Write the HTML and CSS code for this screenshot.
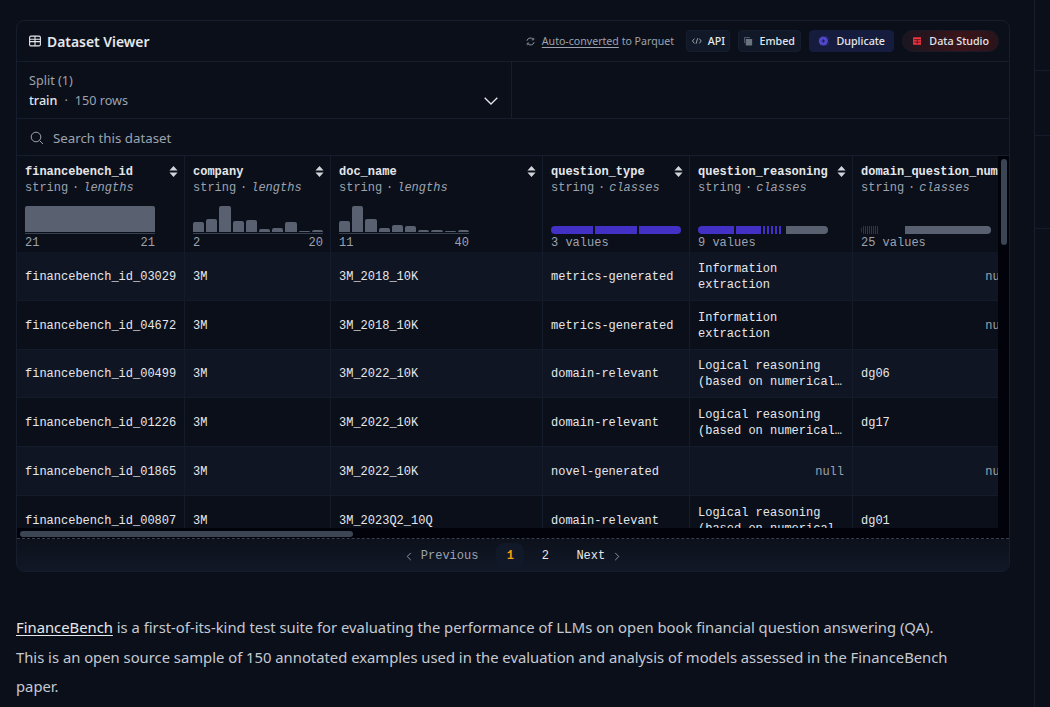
FILE: index.html
```html
<!DOCTYPE html>
<html lang="en">
<head>
<meta charset="utf-8">
<title>Dataset Viewer</title>
<link rel="stylesheet" href="styles.css">
</head>
<body>
<div class="page">
<main class="main">
<section class="card">
  <header class="head">
    <h2 class="title"><svg class="ico-table" viewBox="0 0 12 12"><rect x=".6" y="1.1" width="10.8" height="9.8" rx="1.4" fill="none" stroke="currentColor" stroke-width="1.1"/><path d="M.6 4.2h10.8M.6 6.6h10.8M6 1.1v9.8" stroke="currentColor" stroke-width="1.1" fill="none"/></svg>Dataset Viewer</h2>
    <div class="actions">
      <span class="auto"><svg class="ico-conv" viewBox="0 0 10 10"><path d="M1 4.2A4 4 0 0 1 8 2.6M9 5.8A4 4 0 0 1 2 7.4" fill="none" stroke="currentColor" stroke-width="1"/><path d="M8.6.9v2.3H6.3M1.4 9.1V6.8h2.3" fill="none" stroke="currentColor" stroke-width=".8"/></svg><a class="link">Auto-converted</a> to Parquet</span>
      <span class="btn btn-api"><svg class="ico-code" viewBox="0 0 12 8"><path d="M3 1 .6 4 3 7M9 1l2.4 3L9 7M7 .6 5 7.4" fill="none" stroke="currentColor" stroke-width=".9"/></svg>API</span>
      <span class="btn btn-embed"><svg class="ico-copy" viewBox="0 0 11 11"><path d="M.5 7.5V.5h7" fill="none" stroke="#6b7280" stroke-width="1"/><rect x="2.2" y="2.2" width="8.3" height="8.3" rx=".8" fill="#6b7280"/></svg>Embed</span>
      <span class="btn btn-dup"><svg class="ico-dup" viewBox="0 0 14 14"><circle cx="6.5" cy="7" r="5.6" fill="#4f46c8"/><path d="M10 .9A6.8 6.8 0 0 1 10 13.1" fill="none" stroke="#4338ca" stroke-dasharray="1 .8"/><path d="M6.5 5v4M4.5 7h4" stroke="#14183a" stroke-width="1"/></svg>Duplicate</span>
      <span class="btn btn-studio"><svg class="ico-studio" viewBox="0 0 11 10"><rect width="11" height="10" rx="1" fill="#ef3340"/><path d="M1 3.2h9M1 6.4h9M5.5 3.2V9" stroke="#3a1118" stroke-width="1"/></svg>Data Studio</span>
    </div>
  </header>
  <div class="split-row">
    <div class="split">
      <div class="split-label">Split (1)</div>
      <div class="split-val"><span><b>train</b><i class="sep">·</i>150 rows</span><svg class="chev" viewBox="0 0 14 8"><path d="M.7.8 7 7l6.3-6.2" fill="none" stroke="currentColor" stroke-width="1.3"/></svg></div>
    </div>
  </div>
  <div class="search"><svg class="ico-search" viewBox="0 0 14 14"><circle cx="6" cy="6" r="4.8" fill="none" stroke="currentColor" stroke-width="1"/><path d="m9.6 9.6 3.4 3.4" stroke="currentColor" stroke-width="1"/></svg>Search this dataset</div>
  <div class="table-wrap">
    <div class="table-scroll">
    <table class="table">
      <colgroup><col class="c1"><col class="c2"><col class="c3"><col class="c4"><col class="c5"><col class="c6"></colgroup>
      <thead><tr>
        <th><div class="name"><span>financebench_id</span><svg class="sort" viewBox="0 0 10 12"><path d="M5 0 9.5 5H.5zM5 12 .5 7h9z"/></svg></div><div class="type">string<span class="dot">·</span><em>lengths</em></div>
          <div class="hist"><i class="full"></i></div><div class="range"><span>21</span><span>21</span></div></th>
        <th><div class="name"><span>company</span><svg class="sort" viewBox="0 0 10 12"><path d="M5 0 9.5 5H.5zM5 12 .5 7h9z"/></svg></div><div class="type">string<span class="dot">·</span><em>lengths</em></div>
          <div class="hist"><i class="h10"></i><i class="h13"></i><i class="h26"></i><i class="h11"></i><i class="h12"></i><i class="h3"></i><i class="h4"></i><i class="h10"></i><i class="h1"></i><i class="h2"></i></div><div class="range"><span>2</span><span>20</span></div></th>
        <th><div class="name"><span>doc_name</span><svg class="sort" viewBox="0 0 10 12"><path d="M5 0 9.5 5H.5zM5 12 .5 7h9z"/></svg></div><div class="type">string<span class="dot">·</span><em>lengths</em></div>
          <div class="hist"><i class="h11"></i><i class="h26"></i><i class="h13"></i><i class="h4"></i><i class="h7"></i><i class="h6"></i><i class="h2"></i><i class="h2"></i><i class="h1"></i><i class="h2"></i></div><div class="range"><span>11</span><span>40</span></div></th>
        <th><div class="name"><span>question_type</span><svg class="sort" viewBox="0 0 10 12"><path d="M5 0 9.5 5H.5zM5 12 .5 7h9z"/></svg></div><div class="type">string<span class="dot">·</span><em>classes</em></div>
          <div class="bar"><i class="seg s42"></i><i class="seg s42"></i><i class="seg s42"></i></div><div class="range"><span>3 values</span></div></th>
        <th><div class="name"><span>question_reasoning</span><svg class="sort" viewBox="0 0 10 12"><path d="M5 0 9.5 5H.5zM5 12 .5 7h9z"/></svg></div><div class="type">string<span class="dot">·</span><em>classes</em></div>
          <div class="bar"><i class="seg s36"></i><i class="seg s25"></i><i class="seg s2"></i><i class="seg s2"></i><i class="seg s2"></i><i class="seg s2"></i><i class="seg s2"></i><i class="rest"></i></div><div class="range"><span>9 values</span></div></th>
        <th><div class="name"><span class="cut">domain_question_num</span></div><div class="type">string<span class="dot">·</span><em>classes</em></div>
          <div class="bar ticks"><i class="tick"></i><i class="tick"></i><i class="tick"></i><i class="tick"></i><i class="tick"></i><i class="tick"></i><i class="tick"></i><i class="tick"></i><i class="tick"></i><i class="rest wide"></i></div><div class="range"><span>25 values</span></div></th>
      </tr></thead>
      <tbody>
        <tr><td>financebench_id_03029</td><td>3M</td><td>3M_2018_10K</td><td>metrics-generated</td><td>Information<br>extraction</td><td class="null">null</td></tr>
        <tr><td>financebench_id_04672</td><td>3M</td><td>3M_2018_10K</td><td>metrics-generated</td><td>Information<br>extraction</td><td class="null">null</td></tr>
        <tr><td>financebench_id_00499</td><td>3M</td><td>3M_2022_10K</td><td>domain-relevant</td><td>Logical reasoning<br>(based on numerical…</td><td>dg06</td></tr>
        <tr><td>financebench_id_01226</td><td>3M</td><td>3M_2022_10K</td><td>domain-relevant</td><td>Logical reasoning<br>(based on numerical…</td><td>dg17</td></tr>
        <tr><td>financebench_id_01865</td><td>3M</td><td>3M_2022_10K</td><td>novel-generated</td><td class="null">null</td><td class="null">null</td></tr>
        <tr><td>financebench_id_00807</td><td>3M</td><td>3M_2023Q2_10Q</td><td>domain-relevant</td><td>Logical reasoning<br>(based on numerical…</td><td>dg01</td></tr>
      </tbody>
    </table>
    </div>
    <div class="vtrack"><i class="vthumb"></i></div>
  </div>
  <div class="htrack"><i class="hthumb"></i></div>
  <nav class="pager">
    <span class="pg prev"><svg class="pchev" viewBox="0 0 6 10"><path d="M5 1 1 5l4 4" fill="none" stroke="currentColor"/></svg>Previous</span>
    <span class="num active">1</span>
    <span class="num">2</span>
    <span class="pg next">Next<svg class="pchev" viewBox="0 0 6 10"><path d="m1 1 4 4-4 4" fill="none" stroke="currentColor"/></svg></span>
  </nav>
</section>
<div class="prose">
  <p><a class="plink">FinanceBench</a> is a first-of-its-kind test suite for evaluating the performance of LLMs on open book financial question answering (QA).</p>
  <p>This is an open source sample of 150 annotated examples used in the evaluation and analysis of models assessed in the FinanceBench paper.</p>
</div>
</main>
<aside class="side"><div class="side-a"></div><div class="side-b"></div><div class="side-c"></div></aside>
</div>
</body>
</html>
```
FILE: styles.css
```css
* { box-sizing: border-box; }
html, body { margin: 0; height: 100%; overflow: hidden; }
body { background: #0b0f19; color: #e5e7eb; font-family: "Noto Sans", sans-serif; }
.page { display: flex; height: 707px; }
.main { width: 1035px; padding: 20px 0 0 16px; flex: none; border-right: 1px solid #161e2e; }
.side { flex: 1; }
.side-a { height: 71px; border-bottom: 1px solid #141b2a; }
.side-b { height: 65px; border-bottom: 1px solid #141b2a; }
.side-c { height: 93px; border-bottom: 1px solid #141b2a; }
.card { width: 994px; height: 552px; border: 1px solid #161e2e; border-radius: 8px; display: flex; flex-direction: column; overflow: hidden; background: #0b0f19; }
.head { height: 41px; flex: none; display: flex; align-items: center; justify-content: space-between; padding: 0 10px 0 12px; border-bottom: 1px solid #161e2e; }
.title { margin: 0; display: flex; align-items: center; gap: 6px; font-size: 13.9px; font-weight: 600; color: #e5e7eb; }
.ico-table { width: 12px; height: 12px; }
.actions { display: flex; align-items: center; font-size: 10.7px; white-space: nowrap; }
.auto { color: #9ca3af; display: flex; align-items: center; margin-right: 12px; white-space: pre; font-size: 10.6px; }
.ico-conv { width: 9px; height: 9px; margin-right: 7px; color: #9ca3af; }
.link { text-decoration: underline; text-underline-offset: 2px; }
.btn { height: 22px; display: flex; align-items: center; border-radius: 4px; color: #e5e7eb; border: 1px solid #161e2e; background: #111827; margin-left: 8px; font-weight: 500; }
.btn-api { padding: 0 4px 0 5px; width: 44px; margin-left: 0; }
.ico-code { width: 11px; height: 8px; margin-right: 6px; color: #d1d5db; }
.btn-embed { width: 63px; padding: 0 5px; }
.ico-copy { width: 11px; height: 11px; margin-right: 7px; }
.btn-dup { width: 85px; padding: 0 8px; background: #151c3e; border-color: #151c3e; }
.ico-dup { width: 14px; height: 14px; margin-right: 7px; }
.btn-studio { width: 97px; padding: 0 9px 0 10px; border-radius: 11px; background: linear-gradient(90deg, #1a1520, #3a1519 60%, #2a131a); border-color: #1c1a26; }
.ico-studio { width: 11px; height: 10px; margin-right: 8px; }
.split-row { height: 57px; flex: none; border-bottom: 1px solid #161e2e; }
.split { width: 495px; height: 56px; border-right: 1px solid #161e2e; padding: 10px 13px 0 12px; }
.split-label { font-size: 12.6px; line-height: 18px; color: #9ca3af; }
.split-val { font-size: 12.6px; line-height: 21px; color: #9ca3af; display: flex; justify-content: space-between; align-items: center; }
.split-val b { font-weight: 500; color: #e5e7eb; }
.sep { font-style: normal; margin: 0 7px; }
.chev { width: 14px; height: 8px; color: #e5e7eb; }
.search { height: 37px; flex: none; display: flex; align-items: center; padding: 1px 0 0 13px; font-size: 13.3px; color: #9ca3af; border-bottom: 1px solid #161e2e; }
.ico-search { width: 14px; height: 14px; margin-right: 9px; }
.table-wrap { display: flex; height: 372px; flex: none; }
.table-scroll { width: 981px; overflow: hidden; flex: none; }
.table { border-collapse: separate; border-spacing: 0; table-layout: fixed; width: 1006px; font-family: "Liberation Mono", monospace; font-size: 12px; }
.c1 { width: 168px; } .c2 { width: 146px; } .c3 { width: 212px; } .c4 { width: 147px; } .c5 { width: 163px; } .c6 { width: 170px; }
th { height: 96px; padding: 8px 6px 0 8px; vertical-align: top; text-align: left; font-weight: 400; border-right: 1px solid #141b2a; }
td { height: 48.75px; padding: 2px 8px 0; line-height: 16px; color: #e5e7eb; white-space: nowrap; border: 1px solid #141b2a; border-width: 0 1px 1px 0; background: #0b0f19; }
tbody tr:nth-child(odd) td { background: #101523; }
td.null { text-align: right; color: #9ca3af; }
.name { display: flex; justify-content: space-between; align-items: center; font-weight: 700; color: #e5e7eb; height: 15px; margin-bottom: 1px; }
.cut { white-space: nowrap; }
.sort { width: 9px; height: 11px; fill: #d1d5db; flex: none; }
.type { color: #9ca3af; height: 17px; line-height: 17px; white-space: nowrap; }
.dot { display: inline-block; width: 15px; text-align: center; }
.type em { font-style: italic; }
.hist { margin-top: 9px; height: 28px; width: 130px; border-bottom: 1px solid #374151; padding-bottom: 1px; display: flex; align-items: flex-end; gap: 2px; }
.hist i { flex: 1; background: #596070; border-radius: 2px 2px 0 0; }
.hist .full { height: 100%; }
.h1 { height: 1px; } .h2 { height: 2px; } .h3 { height: 3px; } .h4 { height: 4px; } .h6 { height: 6px; } .h7 { height: 7px; }
.h10 { height: 10px; } .h11 { height: 11px; } .h12 { height: 12px; } .h13 { height: 13px; } .h26 { height: 26px; }
.range { display: flex; justify-content: space-between; color: #9ca3af; height: 17px; padding-top: 1px; line-height: 16px; width: 130px; }
.bar { margin-top: 29px; height: 8px; width: 130px; display: flex; gap: 2px; border-radius: 4px; overflow: hidden; }
.seg { background: #4330c4; display: block; }
.s42 { flex: 1; } .s36 { width: 36px; } .s25 { width: 25px; } .s2 { width: 2px; }
.rest { flex: 1; margin-left: 3px; background: #596070; display: block; }
.ticks { gap: 1px; }
.tick { width: 1px; background: #2e2a88; display: block; }
.wide { margin-left: 26px; }
.vtrack { flex: 1; background: #02030a; padding: 3px 0 0 3px; }
.vthumb { display: block; width: 6px; height: 86px; background: #3b4554; border-radius: 3px; }
.htrack { height: 11px; flex: none; background: #02030a; padding: 3px 3px 0; border-bottom: 1px dashed #374151; }
.hthumb { display: block; height: 6px; width: 333px; background: #3b4554; border-radius: 3px; }
.pager { flex: 1; display: flex; justify-content: center; align-items: center; padding-top: 2px; font-family: "Liberation Mono", monospace; font-size: 12px; background: linear-gradient(180deg, #0c111b, #111827); }
.pg { display: flex; align-items: center; gap: 9px; }
.prev { color: #9ca3af; margin-right: 18px; }
.next { color: #e5e7eb; margin-left: 17px; }
.pchev { width: 6px; height: 9px; color: #9ca3af; }
.num { width: 28px; height: 27px; display: flex; align-items: center; justify-content: center; border-radius: 8px; color: #e5e7eb; }
.num + .num { margin-left: 7px; }
.active { color: #f59e0b; font-weight: 700; background: #111827; }
.prose { margin-top: 41px; width: 970px; font-size: 14.8px; line-height: 29.5px; color: #c4c9d2; }
.prose p { margin: 0; }
.plink { color: #e5e7eb; text-decoration: underline; text-underline-offset: 2px; }
```
